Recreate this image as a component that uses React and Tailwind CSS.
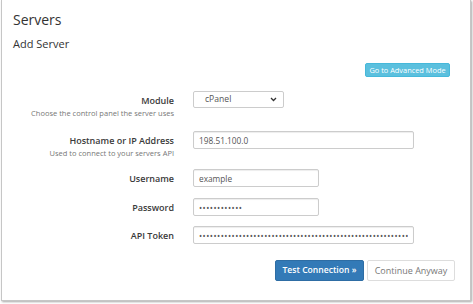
import React from 'react';

const Row = ({ label, help, children, className = '' }) => (
  <div className={`flex items-start ${className}`}>
    <div className="w-[172px] text-right">
      <div className="h-[18px] leading-[19px] text-[9px] font-semibold text-[#3a3a3a]">{label}</div>
      {help && <div className="leading-[8px] text-[7.5px] text-[#777]">{help}</div>}
    </div>
    <div className="ml-[19px] flex">{children}</div>
  </div>
);

const inputCls =
  'block h-[18px] border border-[#ccc] rounded-[2px] px-[5px] text-[8.3px] text-[#555] bg-white outline-none shadow-[inset_0_1px_1px_rgba(0,0,0,0.075)]';

export default function App() {
  return (
    <div className="w-[473px] h-[304px] bg-white pl-[1px]" style={{ fontFamily: '"Open Sans", "Liberation Sans", sans-serif' }}>
      <div className="w-[470px] h-[301px] border-x border-b border-[#c6c6c6] shadow-[1px_1px_2px_rgba(0,0,0,0.35)] flex flex-col">
        <div className="pl-[11px] pt-[10px] h-[30px] leading-5 text-[14px] text-[#333]">Servers</div>
        <div className="pl-[11px] mt-[6px] leading-4 text-[11px] text-[#333]">Add Server</div>

        <div className="flex justify-end mt-[11px] pr-[20px]">
          <button className="w-[85px] h-[14px] rounded-[2px] bg-[#5bc0de] border border-[#46b8da] text-white text-[7.4px] leading-[12px] whitespace-nowrap">
            Go to Advanced Mode
          </button>
        </div>

        <Row label="Module" help="Choose the control panel the server uses" className="mt-[14px]">
          <div className="relative w-[91px] h-[17px] border border-[#ccc] rounded-[2px] bg-white flex items-center pl-[11px] text-[8.6px] text-[#555]">
            cPanel
            <svg className="absolute right-[6px] top-[5px]" width="7" height="5" viewBox="0 0 7 5">
              <path d="M1 1l2.5 2.5L6 1" fill="none" stroke="#333" strokeWidth="1.3" />
            </svg>
          </div>
        </Row>

        <Row label="Hostname or IP Address" help="Used to connect to your servers API" className="mt-[14px]">
          <input readOnly value="198.51.100.0" className={`${inputCls} w-[221px]`} />
        </Row>

        <Row label="Username" className="mt-[12px]">
          <input readOnly value="example" className={`${inputCls} w-[126px]`} />
        </Row>

        <Row label="Password" className="mt-[11px]">
          <input readOnly type="password" value="xxxxxxxxxxxx" className={`${inputCls} w-[126px] text-[5px] tracking-[0.5px]`} />
        </Row>

        <Row label="API Token" className="mt-[10px]">
          <input readOnly type="password" value={'x'.repeat(62)} className={`${inputCls} w-[221px] text-[5px] tracking-[0.5px]`} />
        </Row>

        <div className="flex justify-end gap-[3px] mt-[16px] pr-[15px]">
          <button className="w-[89px] h-[21px] rounded-[2px] bg-[#337ab7] border border-[#2e6da4] text-white text-[8.6px] font-semibold">
            Test Connection »
          </button>
          <button className="w-[88px] h-[21px] rounded-[2px] bg-white border border-[#ddd] text-[#777] text-[9px]">
            Continue Anyway
          </button>
        </div>
      </div>
    </div>
  );
}
